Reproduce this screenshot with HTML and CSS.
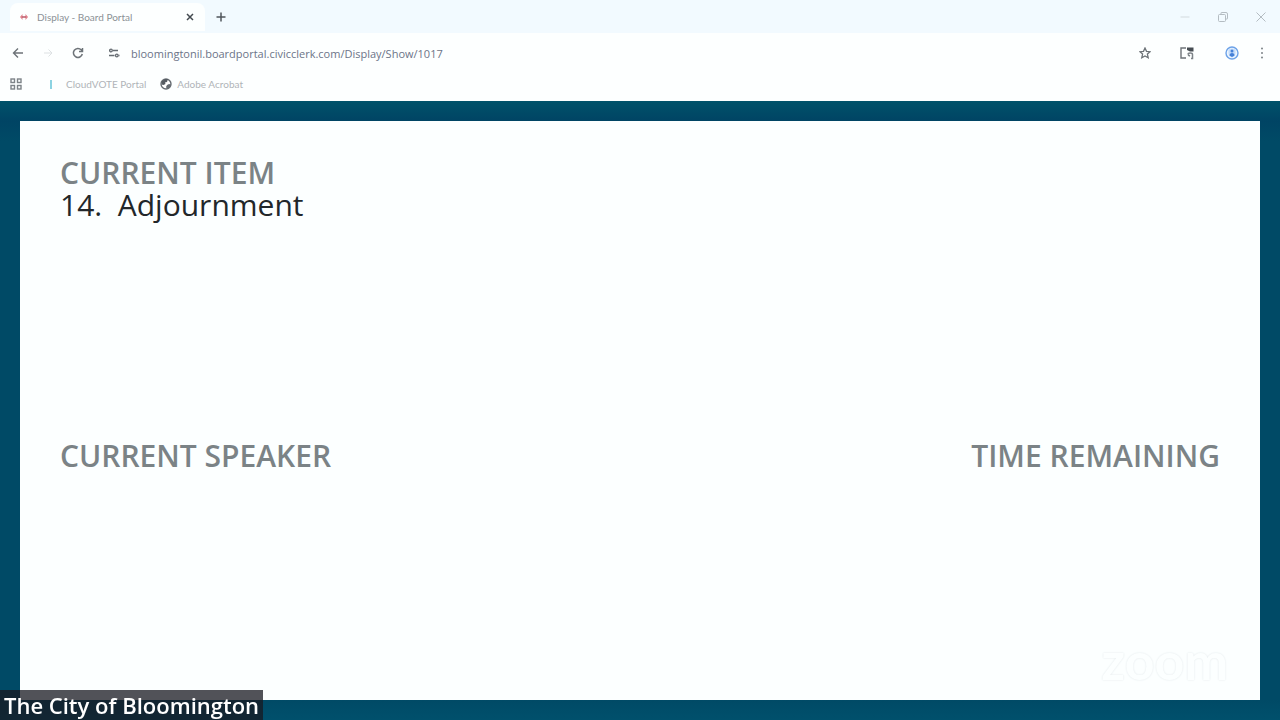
FILE: index.html
```html
<!DOCTYPE html>
<html lang="en">
<head>
  <meta charset="UTF-8">
  <meta name="viewport" content="width=device-width, initial-scale=1.0">
  <title>Display - Board Portal</title>
  <link rel="stylesheet" href="styles.css">
</head>
<body>
  <header class="browser">
    <div class="tab-strip">
      <div class="tab">
        <svg class="favicon" viewBox="0 0 10 10" width="10" height="10"><path d="M3.500 2L1 5l2.500 3z" fill="#e0808a"/><path d="M6.500 2L9 5 6.500 8z" fill="#e0808a"/><path d="M3 5h4" stroke="#b85868" stroke-width="1.500"/></svg>
        <span class="tab-title">Display - Board Portal</span>
        <button class="icon-btn" aria-label="Close tab">
          <svg viewBox="0 0 10 10" width="10" height="10"><path d="M2 2l6 6M8 2L2 8" stroke="#444a50" stroke-width="1.500"/></svg>
        </button>
      </div>
      <button class="icon-btn" aria-label="New tab">
        <svg viewBox="0 0 12 12" width="12" height="12"><path d="M6 1.500v9M1.500 6h9" stroke="#50565c" stroke-width="1.500"/></svg>
      </button>
      <div class="window-buttons">
        <button class="icon-btn" aria-label="Minimize">
          <svg viewBox="0 0 12 12" width="12" height="12"><path d="M1.500 6h9" stroke="#d3dade"/></svg>
        </button>
        <button class="icon-btn" aria-label="Restore">
          <svg viewBox="0 0 12 12" width="12" height="12" fill="none" stroke="#b4bcc2"><rect x="1.500" y="3.500" width="7" height="7" rx="1"/><path d="M4 3.500V2q0-.5.5-.5H9q1.500 0 1.500 1.500v4.500q0 .5-.5.5H8.500"/></svg>
        </button>
        <button class="icon-btn" aria-label="Close window">
          <svg viewBox="0 0 12 12" width="12" height="12"><path d="M1.500 1.500l9 9M10.500 1.500l-9 9" stroke="#b4bcc2"/></svg>
        </button>
      </div>
    </div>
    <div class="toolbar">
      <div class="nav-buttons">
        <button class="icon-btn" aria-label="Back">
          <svg viewBox="0 0 12 12" width="12" height="12" fill="none" stroke="#6d7378" stroke-width="1.400"><path d="M11 6H2M6 1.500L1.500 6 6 10.500"/></svg>
        </button>
        <button class="icon-btn" aria-label="Forward">
          <svg viewBox="0 0 12 12" width="12" height="12" fill="none" stroke="#dde1e3"><path d="M2 6h8M6.500 2.500L10 6 6.500 9.500"/></svg>
        </button>
        <button class="icon-btn" aria-label="Reload">
          <svg viewBox="0 0 12 12" width="12" height="12" fill="none" stroke="#6d7378" stroke-width="1.500"><path d="M10.300 7A4.500 4.500 0 1 1 9.200 2.800L10.500 4.200M10.500 1v3.500H7"/></svg>
        </button>
      </div>
      <button class="icon-btn site-info" aria-label="Site information">
        <svg viewBox="0 0 12 12" width="12" height="12" fill="none" stroke="#666c72" stroke-width="1.300"><path d="M1 3.500h1M5 3.500h5M1 8.500h5.500M10.500 8.500h1"/><circle cx="3" cy="3.500" r="1.300"/><circle cx="8.800" cy="8.500" r="1.300"/></svg>
      </button>
      <input class="address" type="text" aria-label="Address" value="bloomingtonil.boardportal.civicclerk.com/Display/Show/1017">
      <button class="icon-btn" aria-label="Bookmark this page">
        <svg viewBox="0 0 12 12" width="12" height="12" fill="none" stroke="#6d7378" stroke-width="1.300"><path d="M6 1l1.500 3.300 3.600.4-2.700 2.400.8 3.600L6 8.900l-3.200 1.800.8-3.600L.9 4.700l3.600-.4z"/></svg>
      </button>
      <button class="icon-btn side-panel" aria-label="Extension">
        <svg viewBox="0 0 16 14" width="16" height="14"><path d="M7 2H2v10h5" fill="none" stroke="#6d7378" stroke-width="1.400"/><path d="M8 1.500h6.500v4H11L8 4z" fill="#464c52"/><path d="M9 8.500c0-2 4.500-2 4.500 0v4h-1.500M9 9l2 1" fill="none" stroke="#7d8388" stroke-width="1.500"/></svg>
      </button>
      <button class="icon-btn profile" aria-label="Profile">
        <svg viewBox="0 0 14 14" width="14" height="14"><circle cx="7" cy="7" r="6" fill="#edf6ff" stroke="#6ca2e8" stroke-width="1.400"/><path d="M3.500 3.500L7 2.500l3.500 1v3.500q0 3-3.500 4.500-3.500-1.500-3.500-4.500z" fill="#c4dcfa"/><circle cx="7" cy="5" r="1.500" fill="#4480d8"/><path d="M4.500 9.500q0-2.500 2.500-2.500t2.500 2.500L7 11z" fill="#4480d8"/></svg>
      </button>
      <button class="icon-btn" aria-label="Menu">
        <svg viewBox="0 0 12 12" width="12" height="12" fill="#7d8388"><circle cx="6" cy="1.500" r="1"/><circle cx="6" cy="6" r="1"/><circle cx="6" cy="10.500" r="1"/></svg>
      </button>
    </div>
    <nav class="bookmarks">
      <button class="icon-btn" aria-label="Apps">
        <svg viewBox="0 0 12 12" width="12" height="12" fill="none" stroke="#7d8388" stroke-width="1.400"><rect x="1" y="1" width="3.500" height="3.500"/><rect x="7.500" y="1" width="3.500" height="3.500"/><rect x="1" y="7.500" width="3.500" height="3.500"/><rect x="7.500" y="7.500" width="3.500" height="3.500"/></svg>
      </button>
      <span class="divider"></span>
      <a class="bookmark" href="#">CloudVOTE Portal</a>
      <a class="bookmark" href="#">
        <svg viewBox="0 0 12 12" width="12" height="12"><circle cx="6" cy="6" r="5" fill="#fff" stroke="#666c72" stroke-width="1.400"/><path d="M1.500 6.500L2 3l3-2h3L7 4 5 4.500 5.500 6 3.500 7z" fill="#565c62"/><path d="M11 6.500L9 6 7 7 6 9l1 2 3-1.500z" fill="#666c72"/></svg>
        Adobe Acrobat
      </a>
    </nav>
  </header>

  <main class="display">
    <div class="board">
      <section class="item">
        <h1 class="label">CURRENT ITEM</h1>
        <p class="value">14.&nbsp; Adjournment</p>
      </section>
      <section class="status">
        <h2 class="label">CURRENT SPEAKER</h2>
        <h2 class="label">TIME REMAINING</h2>
      </section>
    </div>
  </main>

  <div class="watermark">zoom</div>
  <div class="participant">The City of Bloomington</div>
</body>
</html>
```
FILE: styles.css
```css
* {
  box-sizing: border-box;
}
body {
  margin: 0;
  min-height: 100vh;
  display: flex;
  flex-direction: column;
  font-family: "Open Sans", "Noto Sans", sans-serif;
  background: #004b68;
}
h1, h2, p {
  margin: 0;
}
.icon-btn {
  display: flex;
  align-items: center;
  justify-content: center;
  flex: none;
  padding: 0;
  border: 0;
  background: none;
}

/* browser chrome */
.browser {
  background: #fdffff;
  font-size: 11px;
}
.tab-strip {
  display: flex;
  align-items: center;
  gap: 10px;
  height: 33px;
  padding: 0 13px 0 10px;
  background: #f2faff;
}
.tab {
  display: flex;
  align-items: center;
  gap: 8px;
  width: 195px;
  height: 28px;
  padding: 0 10px 0 9px;
  border-radius: 8px 8px 0 0;
  background: #fdffff;
}
.tab-title {
  flex: 1;
  font-family: Lato, sans-serif;
  font-size: 10px;
  color: #8c9196;
}
.window-buttons {
  display: flex;
  gap: 26px;
  margin-left: auto;
}
.toolbar {
  display: flex;
  align-items: center;
  height: 40px;
  padding: 0 12px;
}
.nav-buttons {
  display: flex;
  gap: 18px;
}
.site-info {
  margin-left: 24px;
}
.address {
  flex: 1;
  margin-left: 11px;
  padding: 0;
  border: 0;
  outline: 0;
  background: none;
  font: 11px "Open Sans", sans-serif;
  color: #6c7488;
}
.side-panel {
  margin-left: 28px;
}
.profile {
  margin: 0 17px 0 30px;
}
.bookmarks {
  display: flex;
  align-items: center;
  height: 28px;
  padding: 0 10px 6px;
  gap: 14px;
}
.divider {
  width: 2px;
  height: 9px;
  margin-left: 14px;
  background: #8cd3e2;
}
.bookmark {
  display: flex;
  align-items: center;
  gap: 5px;
  font-family: Lato, sans-serif;
  font-size: 10px;
  color: #b0b4b8;
  text-decoration: none;
}

/* meeting display */
.display {
  flex: 1;
  display: flex;
  padding: 20px;
  background: linear-gradient(#00526a, #004464 20px, #004a66 40px, #004a66 calc(100% - 20px), #00506c);
}
.board {
  flex: 1;
  display: grid;
  grid-template-rows: 1fr 1fr;
  padding: 36px 40px 12px;
  background: #fcffff;
}
.label {
  font-size: 30px;
  line-height: 32px;
  font-weight: 600;
  color: #7b8386;
}
.value {
  font-size: 30px;
  line-height: 32px;
  color: #22272a;
}
.status {
  display: flex;
  justify-content: space-between;
  padding-top: 17px;
}

/* call overlays */
.watermark {
  position: fixed;
  right: 52px;
  bottom: 34px;
  font: 700 52px/52px Lato, sans-serif;
  color: #fcffff;
  text-shadow: 0 0 2px #dfe5e8;
}
.participant {
  position: fixed;
  left: 0;
  bottom: 0;
  padding: 0 4px;
  font-size: 22px;
  line-height: 30px;
  font-weight: 600;
  color: #fff;
  background: rgba(24, 24, 32, 0.75);
}
```
